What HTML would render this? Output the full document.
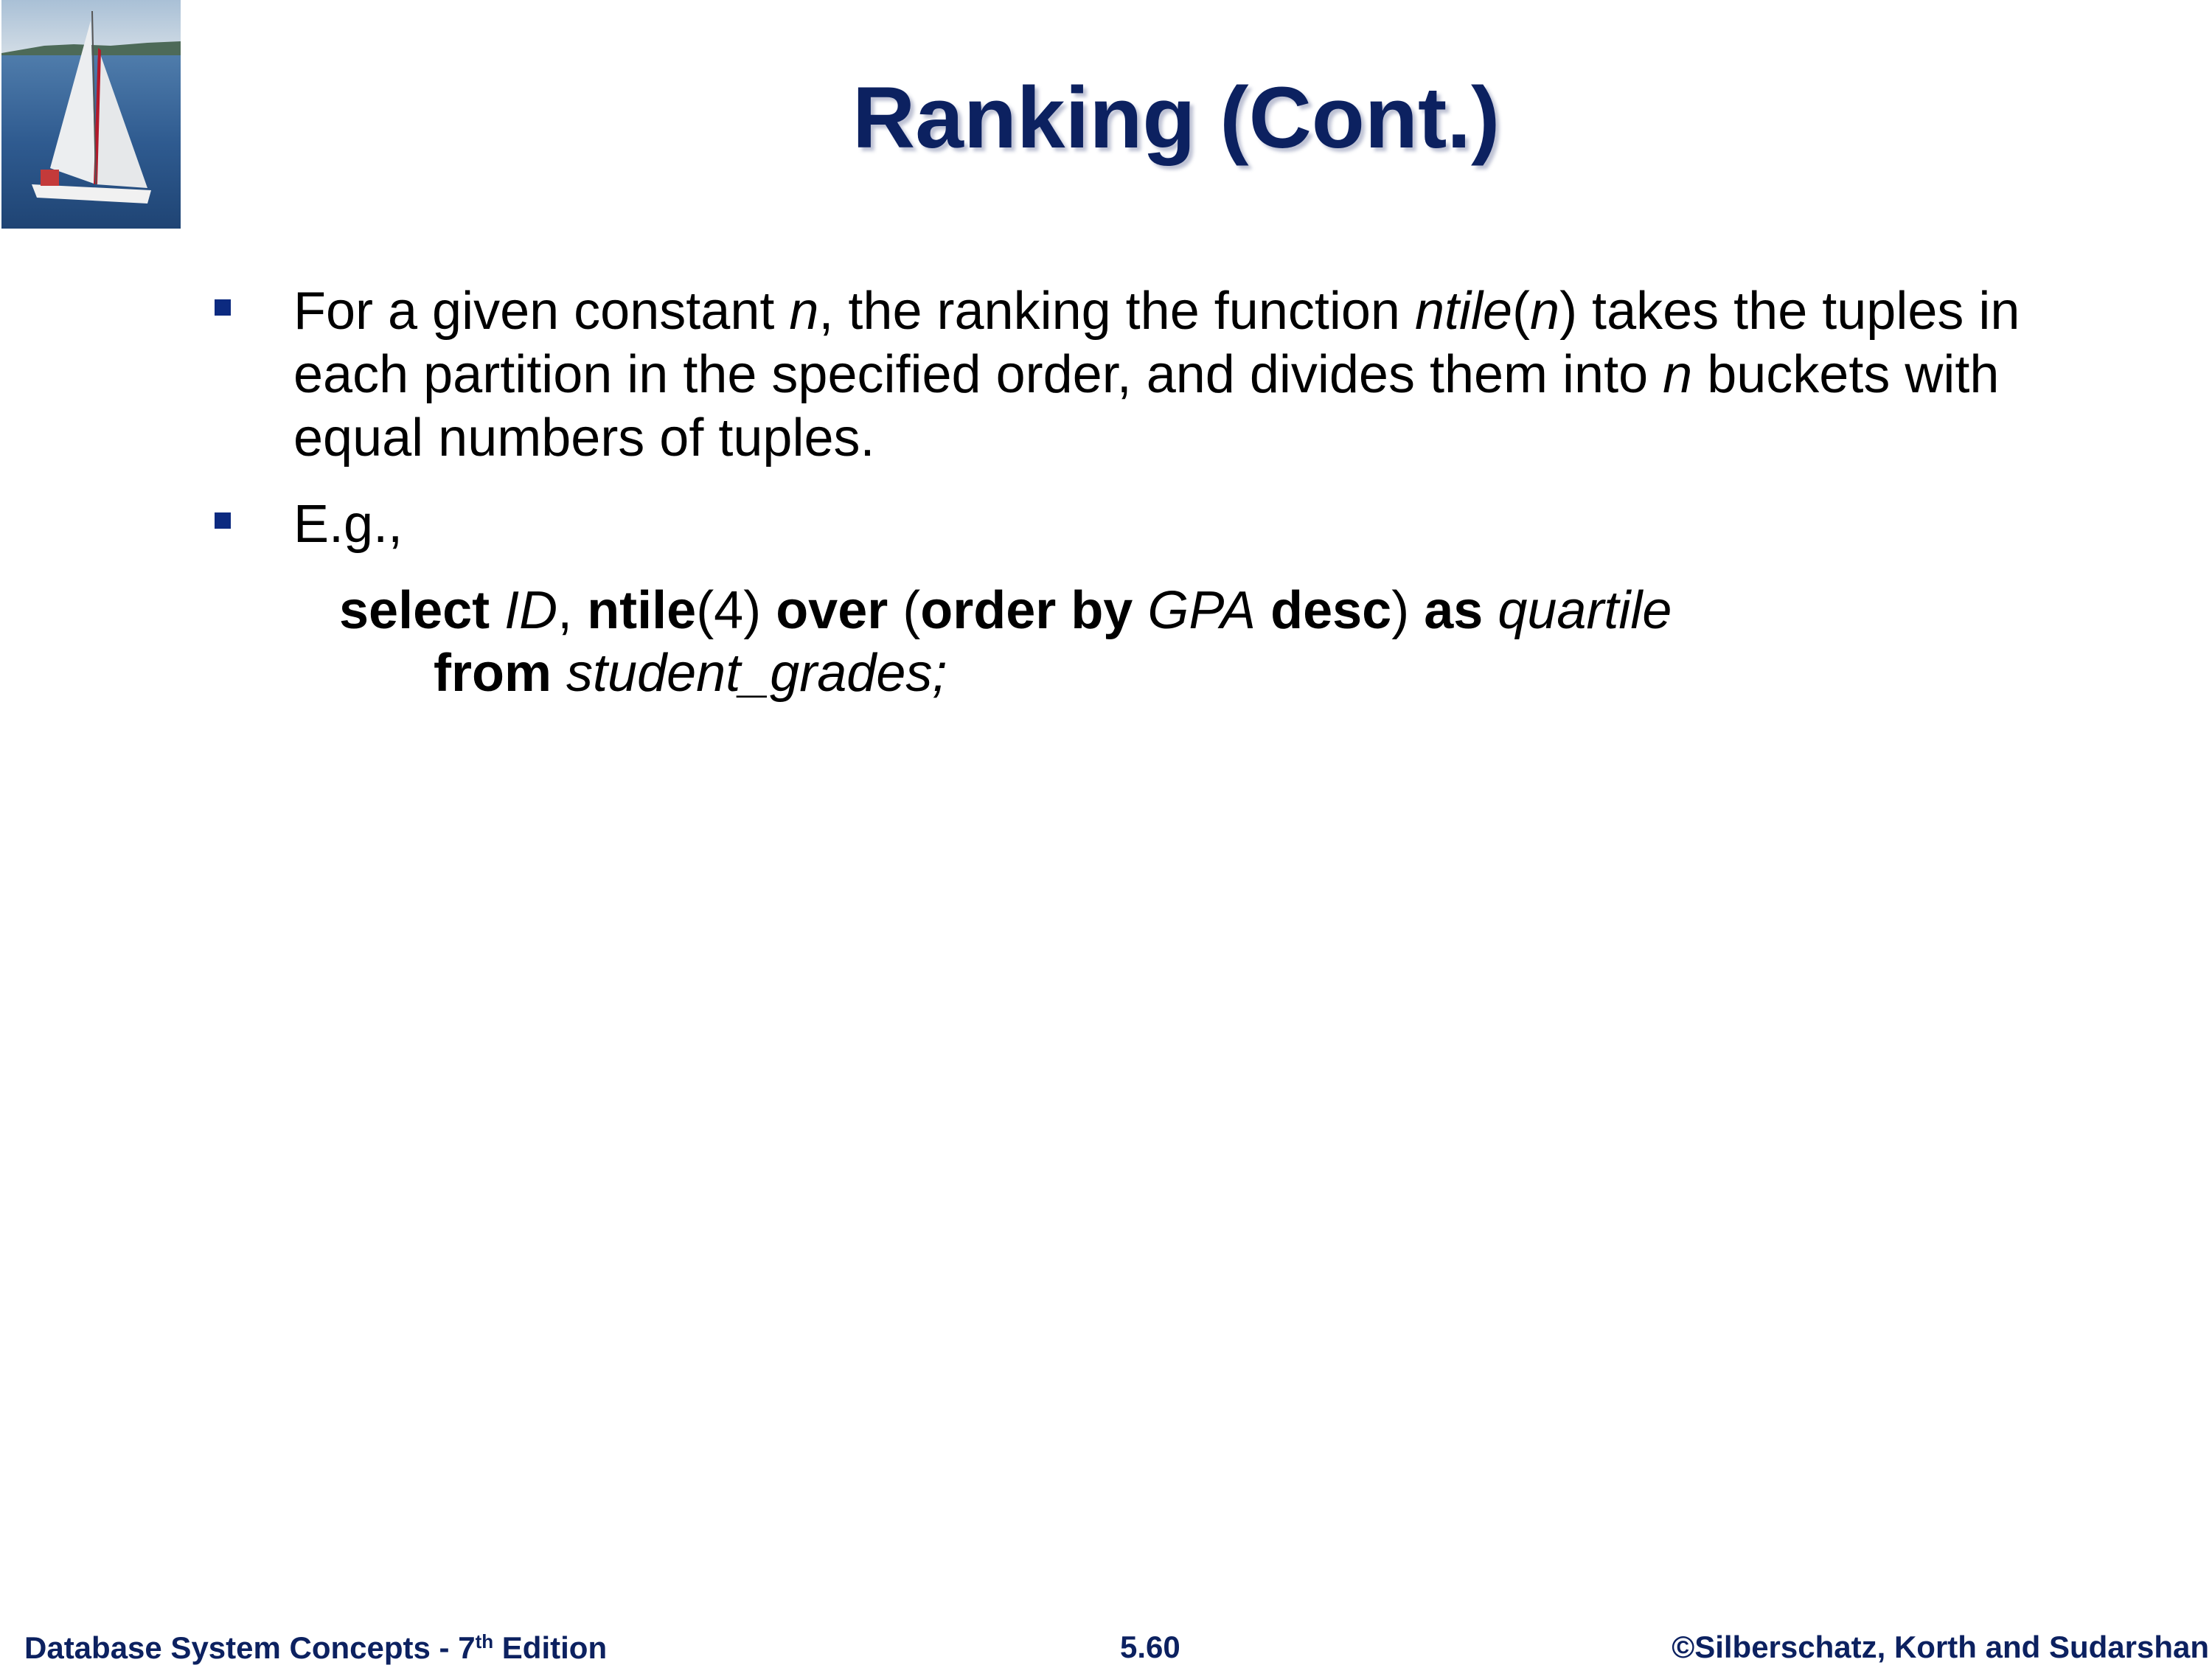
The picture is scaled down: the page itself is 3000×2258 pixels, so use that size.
<!DOCTYPE html>
<html><head><meta charset="utf-8"><style>
html,body{margin:0;padding:0;background:#fff;}
body{width:3000px;height:2250px;position:relative;overflow:hidden;font-family:"Liberation Sans",Arial,sans-serif;}
.t{position:absolute;white-space:nowrap;line-height:1;}
#title{left:1156px;top:101px;font-size:118px;font-weight:bold;color:#0c2160;text-shadow:5px 5px 5px rgba(110,120,160,.45);}
.body{font-size:72px;color:#000;}
.bul{position:absolute;width:22px;height:22px;background:#0c2a80;}
.foot{font-size:42px;font-weight:bold;color:#0c2160;top:2213px;}
</style></head><body>
<svg width="247" height="313" style="position:absolute;left:0;top:0" viewBox="0 0 247 313">
<defs>
<linearGradient id="sky" x1="0" y1="0" x2="0" y2="1"><stop offset="0" stop-color="#a9c0d6"/><stop offset="1" stop-color="#d3dde6"/></linearGradient>
<linearGradient id="sea" x1="0" y1="0" x2="0" y2="1"><stop offset="0" stop-color="#4f7cab"/><stop offset=".5" stop-color="#2f5b90"/><stop offset="1" stop-color="#1f4474"/></linearGradient>
</defs>
<rect x="2" y="0" width="243" height="75" fill="url(#sky)"/>
<path d="M2 72 L60 62 L100 60 L150 62 L200 58 L245 56 L245 78 L2 78Z" fill="#4d6a58"/>
<rect x="2" y="75" width="243" height="235" fill="url(#sea)"/>
<path d="M68 228 L123 28 L130 250 Z" fill="#eceef0"/>
<path d="M133 65 L200 255 L130 250 Z" fill="#e6e8ea"/>
<path d="M133 65 L137 68 L132 250 L127 250Z" fill="#b4182a"/>
<line x1="125" y1="15" x2="130" y2="250" stroke="#555" stroke-width="2"/>
<path d="M43 250 L205 258 L200 276 L50 268 Z" fill="#f1f1f1"/>
<rect x="55" y="230" width="25" height="22" fill="#c43a3a"/>
</svg>
<div class="t" id="title">Ranking (Cont.)</div>
<div class="bul" style="left:291px;top:406px"></div>
<div class="bul" style="left:291px;top:695px"></div>
<div class="t body" style="left:398px;top:386px">For a given constant <i>n</i>, the ranking the function <i>ntile</i>(<i>n</i>) takes the tuples in</div>
<div class="t body" style="left:398px;top:472px">each partition in the specified order, and divides them into <i>n</i> buckets with</div>
<div class="t body" style="left:398px;top:558px">equal numbers of tuples.</div>
<div class="t body" style="left:398px;top:675px">E.g.,</div>
<div class="t body" style="left:460px;top:792px"><b>select</b> <i>ID</i>, <b>ntile</b>(4) <b>over</b> (<b>order by</b> <i>GPA</i> <b>desc</b>) <b>as</b> <i>quartile</i></div>
<div class="t body" style="left:588px;top:877px"><b>from</b> <i>student_grades;</i></div>
<div class="t foot" style="left:33px">Database System Concepts - 7<sup style="font-size:26px;vertical-align:14px">th</sup> Edition</div>
<div class="t foot" style="left:1519px">5.60</div>
<div class="t foot" style="right:4px">©Silberschatz, Korth and Sudarshan</div>
</body></html>
